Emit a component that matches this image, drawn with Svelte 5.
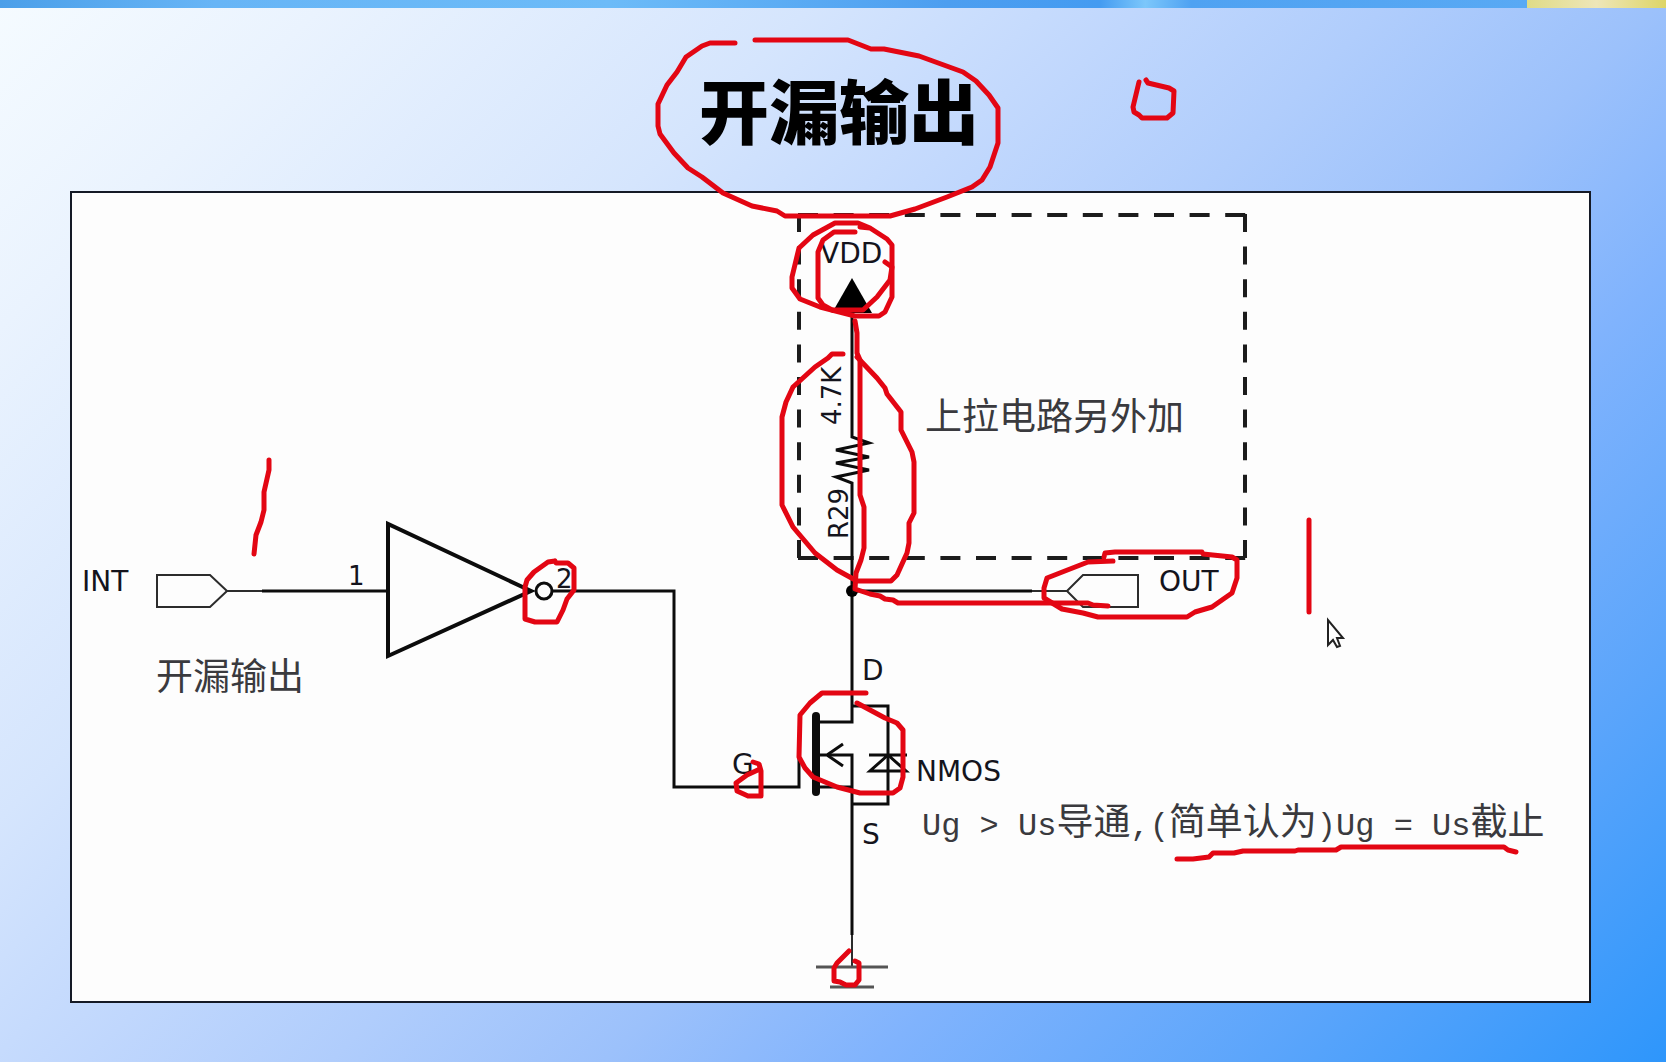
<script>
  // Freehand pen strokes laid over the slide.
  const strokes = [
    '735,43 710,43 702,46 686,57 677,72 667,85 658,104 658,126 660,134 674,153 688,168 702,177 723,193 752,206 777,211 785,216 890,216 915,209 947,197 972,187 982,180 990,167 998,143 998,108 989,95 976,81 963,72 919,56 884,49 871,49 848,40 755,40',
    '1139,82 1133,107 1134,112 1139,115 1142,118 1167,118 1173,113 1174,91 1169,88 1148,83 1146,80',
    '855,232 834,232 823,240 818,252 818,298 823,305 832,310 863,310 877,297 890,280 892,267 885,262',
    '860,227 870,228 887,239 892,245 892,297 885,312 879,316 855,316 820,307 800,299 792,288 792,277 799,248 813,235 835,223 858,223 870,228',
    '855,321 857,333 857,353 860,360 860,495 864,507 864,548 861,560 856,573 855,589 870,594 880,596 885,599 893,600 898,603 1088,603 1093,605 1108,606',
    '843,354 832,354 828,358 815,367 793,387 786,402 782,417 782,505 793,527 815,553 837,570 857,581 891,581 897,575 907,553 909,543 909,523 914,513 914,462 912,452 901,430 901,412 887,394 885,388 877,378 857,357',
    '269,460 269,470 264,492 264,510 261,522 256,535 254,554',
    '555,561 548,562 534,572 527,580 525,587 525,619 535,622 557,622 563,610 567,599 574,590 574,568 568,563 556,563 555,561',
    '866,693 822,693 810,703 800,715 799,757 805,768 813,777 837,787 860,793 893,793 900,788 903,777 903,730 897,723 885,718 857,703',
    '753,762 759,764 761,771 761,796 748,796 737,791 736,783 747,775 760,769',
    '1113,561 1088,562 1070,569 1047,578 1044,588 1044,598 1062,609 1083,613 1098,617 1187,617 1195,612 1212,607 1232,593 1237,578 1237,560 1232,557 1203,554 1202,552 1115,552 1105,553 1104,557',
    '1309,520 1309,612',
    '1177,859 1193,859 1209,857 1213,853 1234,853 1243,851 1295,851 1298,850 1336,850 1341,847 1504,847 1508,850 1516,852',
    '849,951 837,963 834,968 834,981 840,982 846,985 855,985 859,980 859,963 855,961'
  ];
</script>

<main class="slide">
  <div class="strip">
    <span class="sky"></span>
    <span class="gold"></span>
  </div>
  <header>
    <h1>开漏输出</h1>
  </header>
  <section class="panel">
    <svg class="diagram" viewBox="72 193 1517 808" role="img" aria-label="开漏输出">
      <!-- external pull-up box -->
      <g class="dashed">
        <path class="across" d="M798 215H1246M798 558H1246" />
        <path class="down" d="M799 214V559M1245 214V559" />
      </g>

      <!-- VDD, resistor and drain line -->
      <path class="solid" d="M852 278L872 313H832Z" />
      <path class="wire" d="M852 313V437L869 443L836 450L869 457L836 463L869 470L836 477L852 483V722H820" />
      <circle class="solid" cx="852" cy="591" r="6" />

      <!-- output pin -->
      <path class="wire" d="M852 591H1032" />
      <path class="thin" d="M1032 591H1067L1083 575H1138V607H1083L1067 591" />

      <!-- input pin -->
      <path class="thin" d="M262 591H227L210 575H157V607H210L227 591" />
      <path class="wire" d="M262 591H388" />

      <!-- inverter -->
      <path class="bold" d="M388 524V656L531 591Z" />
      <circle class="wire" cx="544" cy="591" r="8" />
      <path class="wire" d="M553 591H674V787H799V740" />

      <!-- transistor with body diode -->
      <path class="gate" d="M816 716V792" />
      <path class="wire" d="M852 706H888V804H852M820 787H852M827 755H852V935" />
      <path class="wire" d="M820 755H828M843 744L827 755L843 766M869 755H907M888 755L870 771H906Z" />

      <!-- ground -->
      <path class="thin" d="M852 935V967" />
      <path class="earth" d="M816 967H888M830 987H874" />

      <g class="label">
        <text x="820" y="263">VDD</text>
        <text x="82" y="591">INT</text>
        <text x="1159" y="591">OUT</text>
        <text x="862" y="680">D</text>
        <text x="862" y="844">S</text>
        <text x="732" y="774">G</text>
        <text x="916" y="781">NMOS</text>
        <text class="small" x="348" y="585">1</text>
        <text class="small" x="556" y="588">2</text>
        <text class="small" transform="translate(841 425) rotate(-90)">4.7K</text>
        <text class="small" transform="translate(848 539) rotate(-90)">R29</text>
      </g>
      <g class="note">
        <text x="925" y="430">上拉电路另外加</text>
        <text x="156" y="690">开漏输出</text>
        <text class="mono" x="922" y="835">Ug &gt; Us<tspan class="han">导通</tspan>,(<tspan class="han">简单认为</tspan>)Ug = Us<tspan class="han">截止</tspan></text>
      </g>

      <g class="ink">
        {#each strokes as points}
          <polyline {points} />
        {/each}
      </g>

      <path class="cursor" d="M1328 620V645L1333 640L1337 647L1340 646L1337 638H1343Z" />
    </svg>
  </section>
</main>

<style>
  :global(body) {
    margin: 0;
  }
  .slide {
    box-sizing: border-box;
    min-height: 100vh;
    overflow: hidden;
    background: linear-gradient(135deg, #f5fbff 0%, #eaf3fe 12%, #d5e5fd 30%, #c0d7fd 42%, #b0cdfc 51%, #9cc1fb 61%, #80b3fd 71%, #5ba5fb 85%, #2e96fb 100%);
  }
  .strip {
    display: flex;
    height: 8px;
  }
  .sky {
    flex: 11;
    background: linear-gradient(90deg, #4b9fe9 0%, #67b5f6 14%, #6cbbf8 40%, #4c9ef0 62%, #449bf1 72%, #7cc7fb 75%, #4fa2f2 78%, #58a9f4 100%);
  }
  .gold {
    flex: 1;
    background: linear-gradient(90deg, #dfdb86, #eee6b8 50%, #ddd566);
  }
  header {
    box-sizing: border-box;
    height: 183px;
    padding: 18px 0 0 12px;
    display: flex;
    align-items: center;
    justify-content: center;
  }
  h1 {
    margin: 0;
    font: 900 70px/1 "Noto Sans CJK SC", sans-serif;
    color: #000;
  }
  .panel {
    margin: 0 75px 58px 70px;
    border: 2px solid #151a26;
    background: #fdfdfd;
  }
  .diagram {
    display: block;
    position: relative;
    width: 100%;
    overflow: visible;
    fill: none;
    stroke: #0c0c0c;
  }
  .dashed {
    stroke: #1c1c1c;
    stroke-width: 4;
  }
  .across {
    stroke-dasharray: 20 15.6;
  }
  .down {
    stroke-dasharray: 18 14.6;
  }
  .solid {
    fill: #000;
    stroke: none;
  }
  .wire {
    stroke-width: 3;
  }
  .thin {
    stroke-width: 2;
    stroke: #2c2c2c;
  }
  .bold {
    stroke-width: 4;
  }
  .gate {
    stroke-width: 8;
    stroke-linecap: round;
  }
  .earth {
    stroke-width: 3;
    stroke: #555;
  }
  .label,
  .note {
    stroke: none;
  }
  .label {
    font: 28px "DejaVu Sans", sans-serif;
    fill: #14141c;
  }
  .small {
    font-size: 26px;
  }
  .note {
    font: 37px "Noto Sans CJK SC", sans-serif;
    fill: #3a3a3e;
  }
  .mono {
    font: 32px "Liberation Mono", monospace;
    white-space: pre;
  }
  .han {
    font: 37px "Noto Sans CJK SC", sans-serif;
  }
  .ink {
    stroke: #e30613;
    stroke-width: 5;
    stroke-linecap: round;
    stroke-linejoin: round;
  }
  .cursor {
    fill: #fff;
    stroke: #222;
    stroke-width: 2;
  }
</style>
